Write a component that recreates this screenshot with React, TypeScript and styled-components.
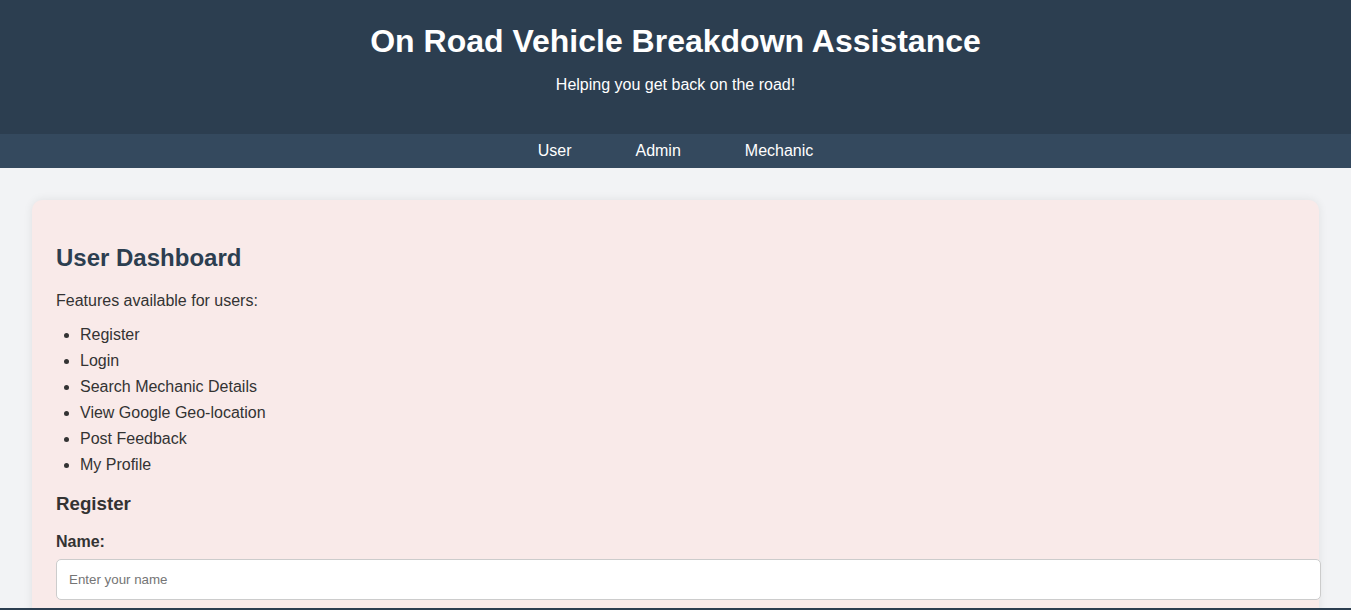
import React from "react";
import styled, { createGlobalStyle } from "styled-components";

const GlobalStyle = createGlobalStyle`
  * { box-sizing: border-box; }
  html, body {
    margin: 0;
    padding: 0;
  }
  body {
    font-family: "Liberation Sans", Arial, sans-serif;
    line-height: 1.6;
    color: #333;
    background: #f2f3f5;
  }
`;

const Header = styled.header`
  background: #2c3e50;
  color: #fff;
  text-align: center;
  padding: 20px;
`;

const Title = styled.h1`
  margin: 2px 0 12px;
  font-size: 32px;
  line-height: 38px;
  font-weight: 700;
`;

const Tagline = styled.p`
  margin: 0 0 16px;
  font-size: 16px;
  line-height: 25.6px;
`;

const Nav = styled.nav`
  background: #34495e;
  display: flex;
  justify-content: center;
  gap: 64px;
  padding: 4px 0;
`;

const NavLink = styled.a`
  color: #fff;
  text-decoration: none;
  font-size: 16px;
  line-height: 26px;
  cursor: pointer;
`;

const Main = styled.main`
  padding: 32px;
`;

const Card = styled.section`
  background: #f9eae9;
  border-radius: 10px;
  box-shadow: 0 0 10px rgba(0, 0, 0, 0.08);
  padding: 24px 24px 40px;
`;

const Heading = styled.h2`
  margin: 15.5px 0 10.5px;
  font-size: 24px;
  line-height: 38.4px;
  color: #2c3e50;
`;

const Text = styled.p`
  margin: 0 0 8px;
  font-size: 16px;
  line-height: 25.6px;
`;

const FeatureList = styled.ul`
  margin: 0 0 11px;
  padding-left: 24px;
`;

const FeatureItem = styled.li`
  font-size: 16px;
  line-height: 26px;
`;

const SubHeading = styled.h3`
  margin: 0 0 10px;
  font-size: 18.72px;
  line-height: 30px;
  color: #333;
`;

const Label = styled.label`
  display: block;
  font-weight: 700;
  font-size: 16px;
  line-height: 25.6px;
  margin-bottom: 4.5px;
`;

const Input = styled.input`
  box-sizing: content-box;
  display: block;
  width: 100%;
  padding: 12px;
  font-family: "Liberation Sans", Arial, sans-serif;
  font-size: 13.333px;
  line-height: 15px;
  height: 15px;
  border: 1px solid #ccc;
  border-radius: 5px;
  background: #fff;
  color: #333;
  outline: none;
  &::placeholder {
    color: #757575;
  }
`;

const Footer = styled.footer`
  position: fixed;
  left: 0;
  right: 0;
  bottom: 0;
  height: 2px;
  background: #2c3e50;
`;

const features = [
  "Register",
  "Login",
  "Search Mechanic Details",
  "View Google Geo-location",
  "Post Feedback",
  "My Profile",
];

export default function App() {
  return (
    <>
      <GlobalStyle />
      <Header>
        <Title>On Road Vehicle Breakdown Assistance</Title>
        <Tagline>Helping you get back on the road!</Tagline>
      </Header>
      <Nav>
        <NavLink>User</NavLink>
        <NavLink>Admin</NavLink>
        <NavLink>Mechanic</NavLink>
      </Nav>
      <Main>
        <Card>
          <Heading>User Dashboard</Heading>
          <Text>Features available for users:</Text>
          <FeatureList>
            {features.map((f) => (
              <FeatureItem key={f}>{f}</FeatureItem>
            ))}
          </FeatureList>
          <SubHeading>Register</SubHeading>
          <Label htmlFor="name">Name:</Label>
          <Input id="name" type="text" placeholder="Enter your name" />
        </Card>
      </Main>
      <Footer />
    </>
  );
}
